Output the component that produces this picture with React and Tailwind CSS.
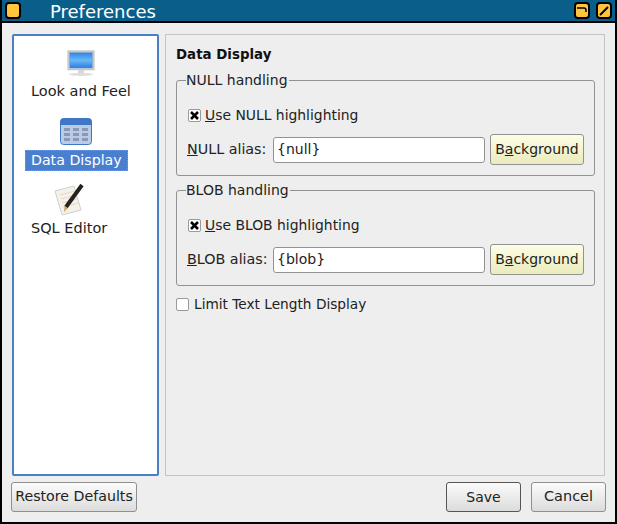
const font = { fontFamily: '"DejaVu Sans", sans-serif' };

function WinBtn({ children }) {
  return (
    <div className="w-[16px] h-[17px] rounded-[4px] border-[2px] border-black bg-[#ffc53d] flex items-center justify-center">
      {children}
    </div>
  );
}

function Btn({ children, className = "" }) {
  return (
    <button className={"h-[30px] rounded-[3px] border bg-gradient-to-b from-[#fbfbfb] to-[#dcdcdc] text-[#222] flex items-center justify-center " + className}>
      {children}
    </button>
  );
}

function Group({ title, check, alias, k, value }) {
  return (
    <fieldset className="border border-[#929292] rounded-[3px] h-[105px] px-[10px] -mt-[10px]">
      <legend className="-ml-[1px] text-[14px] leading-[18px] text-[#222] pr-[1px]">{title}</legend>
      <div className="flex items-center h-[18px] mt-[17px] ml-[1px]">
        <span className="w-[13px] h-[13px] bg-white border border-[#9a9a9a] rounded-[2px] flex items-center justify-center">
          <svg width="9" height="9" viewBox="0 0 9 9"><path d="M1 1 L8 8 M8 1 L1 8" stroke="#000" strokeWidth="2.6" /></svg>
        </span>
        <span className="ml-[4px] text-[13.9px] text-[#222]"><u>U</u>se {check} highlighting</span>
      </div>
      <div className="flex items-center mt-[10px]">
        <span className="text-[14.3px] text-[#222] w-[86px]"><u>{k}</u>{alias}</span>
        <div className="w-[212px] h-[26px] bg-white border border-[#929292] rounded-[3px] flex items-center pl-[3px] text-[14px] text-[#222]">{value}</div>
        <button className="ml-[5px] w-[94px] h-[31px] rounded-[3px] border border-[#929292] bg-gradient-to-b from-[#fdfde6] to-[#ebebbc] text-[14px] text-[#222]">B<u>a</u>ckground</button>
      </div>
    </fieldset>
  );
}

function NavItem({ icon, label, selected, className = "", labelClass = "mt-[3px]" }) {
  return (
    <div className={"self-start ml-[11px] flex flex-col items-center " + className}>
      <div className="h-[42px] flex items-end justify-center">{icon}</div>
      <div className={"flex items-center " + labelClass + " " + (selected ? "h-[21px] text-[14.2px] px-[5px] bg-[#4a7fd0] text-white border border-dotted border-[#d98a20]" : "h-[22px] text-[14.5px] px-[6px] text-[#222]")}>{label}</div>
    </div>
  );
}

const Monitor = (
  <svg width="28" height="27" viewBox="0 0 30 30" preserveAspectRatio="none" className="mb-[1px]">
    <defs>
      <linearGradient id="m" x1="0" y1="0" x2="0" y2="1"><stop offset="0" stopColor="#2f86ea" /><stop offset="0.5" stopColor="#69b8f7" /><stop offset="1" stopColor="#2a7de0" /></linearGradient>
    </defs>
    <rect x="1" y="1" width="28" height="21" fill="#d2d2d2" stroke="#bdbdbd" />
    <rect x="3" y="3" width="24" height="17" fill="url(#m)" stroke="#5d93c6" strokeWidth="0.5" />
    <rect x="12" y="22" width="6" height="4" fill="#d5d5d5" />
    <ellipse cx="15" cy="27" rx="13" ry="1.8" fill="#dedede" />
  </svg>
);

const Table = (
  <svg width="32" height="28" viewBox="0 0 32 28" className="mb-[1px]">
    <rect x="0.5" y="0.5" width="31" height="26" rx="3" fill="#b9cbe6" stroke="#3f76c6" />
    <path d="M0.5 7 V3.5 a3 3 0 0 1 3-3 h25 a3 3 0 0 1 3 3 V7 Z" fill="#3f76c6" />
    <g fill="#8a9ab5">
      <rect x="4" y="10" width="6" height="3" /><rect x="13" y="10" width="6" height="3" /><rect x="22" y="10" width="6" height="3" />
      <rect x="4" y="15" width="6" height="3" /><rect x="13" y="15" width="6" height="3" /><rect x="22" y="15" width="6" height="3" />
      <rect x="4" y="20" width="6" height="3" /><rect x="13" y="20" width="6" height="3" /><rect x="22" y="20" width="6" height="3" />
    </g>
  </svg>
);

const Pencil = (
  <svg width="30" height="32" viewBox="0 0 30 32">
    <path d="M1 7 L20 2 L27 26 L8 31 Z" fill="#f4f1ea" stroke="#cfcfcf" />
    <g stroke="#e8c9b0" strokeWidth="0.7"><path d="M6 11 L21 7" /><path d="M7 15 L22 11" /><path d="M8 19 L23 15" /><path d="M9 23 L24 19" /></g>
    <path d="M28 1 L12 23" stroke="#222" strokeWidth="4" />
    <path d="M10.5 21.8 L13.7 24.2 L10 28 Z" fill="#c9a95a" />
  </svg>
);

export default function App() {
  return (
    <div style={font} className="w-[617px] h-[524px] bg-[#eeeeee] border-x-[2px] border-b-[2px] border-black flex flex-col overflow-hidden">
      <div className="h-[23px] shrink-0 bg-[#0a5f8a] border-b-[2px] border-black flex items-center -mx-[2px] px-[5px]">
        <WinBtn />
        <span className="ml-[29px] pt-[3px] text-white text-[18px] leading-none">Preferences</span>
        <div className="ml-auto flex gap-[6px]">
          <WinBtn>
            <svg width="10" height="10" viewBox="0 0 10 10"><path d="M0 2 H7 Q9 2 9 4 V6" fill="none" stroke="#000" strokeWidth="1.5" /></svg>
          </WinBtn>
          <WinBtn>
            <svg width="10" height="10" viewBox="0 0 10 10"><path d="M1 9 L9 1" stroke="#000" strokeWidth="2" /></svg>
          </WinBtn>
        </div>
      </div>
      <div className="flex-1 flex flex-col pt-[11px] px-[9px]">
        <div className="h-[442px] flex gap-[6px] ml-[1px] mr-[1px]">
          <div className="w-[147px] shrink-0 bg-white border-[2px] border-[#4a7fc4] rounded-[2px] flex flex-col">
            <NavItem icon={Monitor} label="Look and Feel" />
            <NavItem icon={Table} label="Data Display" selected className="mt-[2px]" />
            <NavItem icon={Pencil} label="SQL Editor" className="mt-[3px]" labelClass="mt-[2px]" />
          </div>
          <div className="flex-1 min-w-0 border border-[#c4c4c4] pl-[10px] pr-[9px] pt-[11px]">
            <div className="text-[13.4px] font-bold text-[#111] leading-[18px]">Data Display</div>
            <div className="mt-[17px]">
              <Group title="NULL handling" check="NULL" k="N" alias="ULL alias:" value="{null}" />
            </div>
            <div className="mt-[15px]">
              <Group title="BLOB handling" check="BLOB" k="B" alias="LOB alias:" value="{blob}" />
            </div>
            <div className="flex items-center mt-[9px] h-[18px]">
              <span className="w-[13px] h-[13px] bg-white border border-[#9a9a9a] rounded-[2px]" />
              <span className="ml-[5px] text-[13.7px] text-[#222]">Limit Text Length Display</span>
            </div>
          </div>
        </div>
        <div className="flex items-center mt-[6px]">
          <Btn className="w-[126px] text-[14.2px] border-[#8f8f8f]">Restore Defaults</Btn>
          <Btn className="w-[75px] ml-auto text-[14px] border-[#555]">Save</Btn>
          <Btn className="w-[75px] ml-[10px] text-[14.5px] border-[#8f8f8f]">Cancel</Btn>
        </div>
      </div>
    </div>
  );
}
